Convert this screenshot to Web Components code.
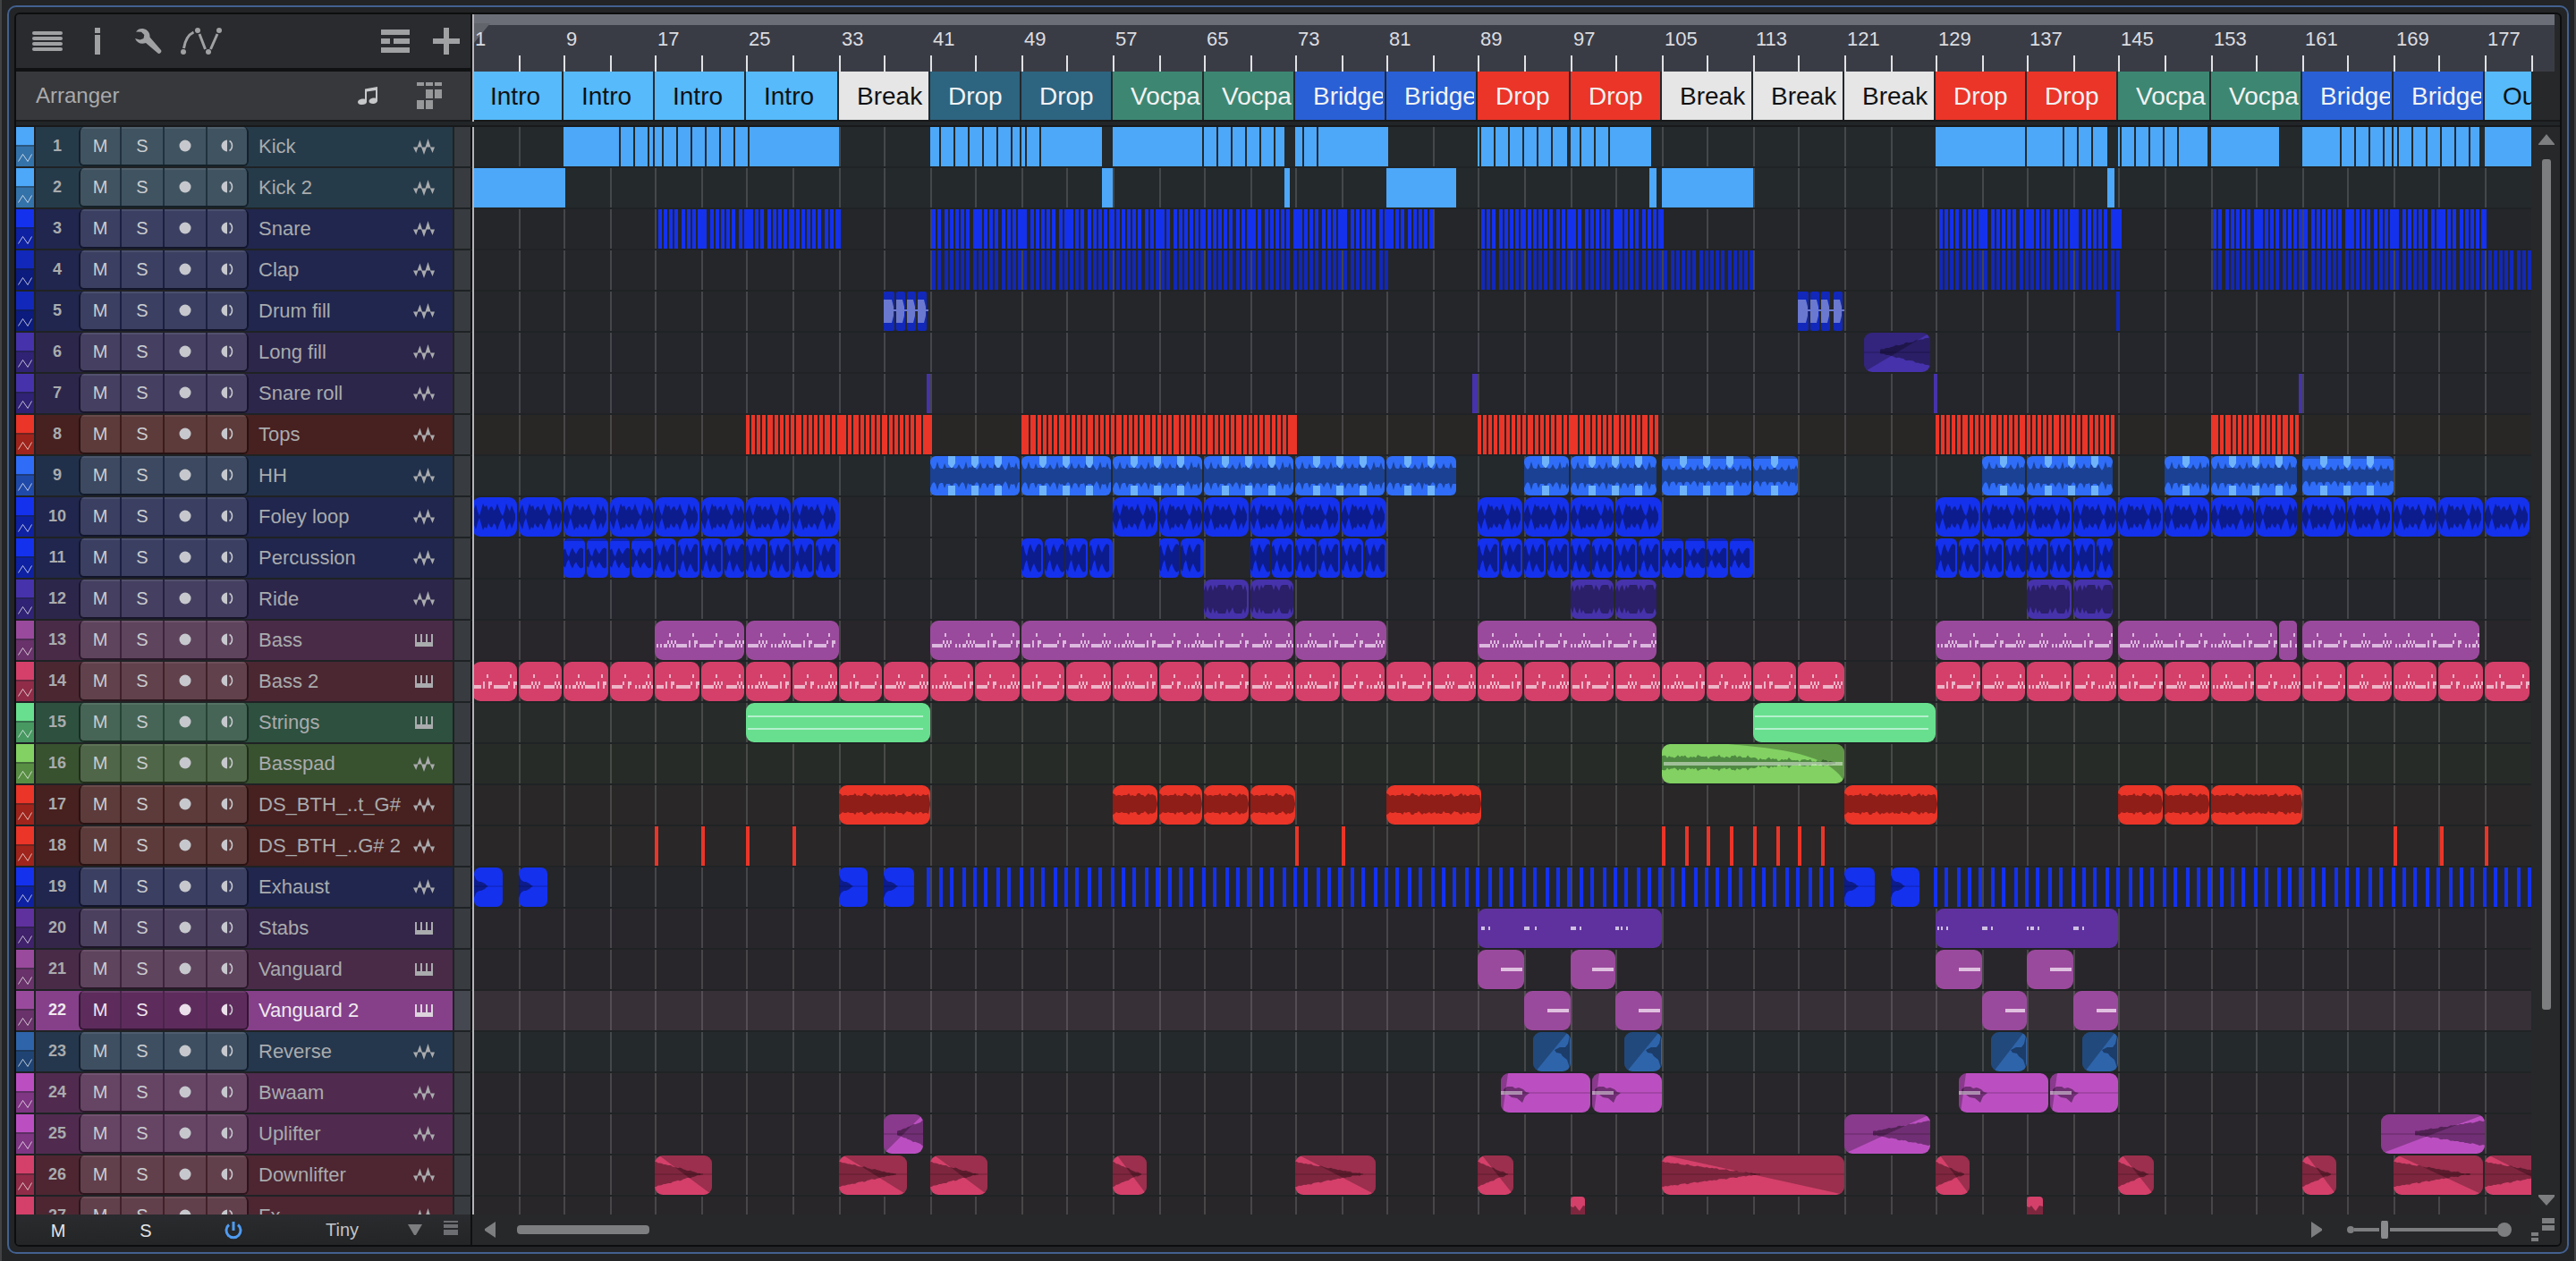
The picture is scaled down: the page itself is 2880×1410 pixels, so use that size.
<!DOCTYPE html>
<html lang="en">
<head>
<meta charset="utf-8">
<title>Arranger</title>
<style>
html,body{margin:0;height:100%;background:#222426}
body{font-family:"Liberation Sans",Arial,sans-serif;overflow:hidden}
</style>
</head>
<body>
<daw-window></daw-window>
<script>
const BAR = 12.784;
// x of a bar line, snapped to the two-pixel raster of the timeline
const R = b => 2 * Math.round((b - 1) * BAR / 2);
const X0 = 528;

class Base extends HTMLElement {
  constructor() {
    super();
    this.attachShadow({ mode: 'open' });
  }
  connectedCallback() {
    this.shadowRoot.innerHTML = `<style>
      *{box-sizing:border-box}
      button,select{all:unset;box-sizing:border-box;display:flex;align-items:center;justify-content:center;cursor:default}
      svg{display:block;flex:none}
      ${this.css()}</style>${this.html()}`;
  }
}

class ToolBar extends Base {
  css() { return `
    :host{display:flex;height:64px;padding-left:11px;background:#2a2b2e;border-bottom:4px solid #101112;color:#a0a1a3}
    svg{fill:currentColor}
    .w48{width:48px}.w50{width:50px}.w54{width:54px}.w60{width:60px}.w64{width:64px}.w68{width:68px}
    .sp{flex:1}`; }
  html() { return `
    <button class="w48" aria-label="Menu"><svg width="34" height="22"><rect width="34" height="4" rx="2"/><rect y="6" width="34" height="4" rx="2"/><rect y="12" width="34" height="4" rx="2"/><rect y="18" width="34" height="4" rx="2"/></svg></button>
    <button class="w64" aria-label="Inspector"><svg width="6" height="30"><rect width="6" height="6"/><rect y="8" width="6" height="22"/></svg></button>
    <button class="w50" aria-label="Tools"><svg width="30" height="30" viewBox="0 0 30 30"><path d="M1 4.500C3 1.500 6 .5 9 1c5 .8 8 5 7.500 9.500L29 25c1.500 2-1.500 5-3.500 3.500L12 17c-5 2-10 0-12-5l5.500 1.500 4-1.500.8-4L7 4.800z"/></svg></button>
    <button class="w68" aria-label="Automation"><svg width="46" height="30" viewBox="0 0 46 30"><g fill="none" stroke="currentColor" stroke-width="3"><path d="M3.500 23C5 14 8 8 14.500 5M21 7l6.500 17M33.500 24L41 7"/></g><circle cx="3" cy="27" r="3"/><circle cx="19" cy="3" r="3"/><circle cx="31" cy="27" r="3"/><circle cx="43" cy="3" r="3"/></svg></button>
    <span class="sp"></span>
    <button class="w60" aria-label="Track list"><svg width="32" height="26"><rect width="32" height="6"/><rect y="10" width="10" height="6"/><rect x="14" y="10" width="18" height="6"/><rect y="20" width="32" height="6"/></svg></button>
    <button class="w54" aria-label="Add track"><svg width="30" height="30"><rect y="12" width="30" height="6"/><rect x="12" width="6" height="30"/></svg></button>`; }
}
customElements.define('tool-bar', ToolBar);

class ArrangerHead extends Base {
  css() { return `
    :host{display:flex;align-items:center;height:54px;padding-left:22px;background:#37383b;color:#a9aaac;font-size:24px}
    span{flex:1}
    .n{width:46px;height:54px;color:#c6c8ca}.g{width:92px;height:54px;color:#97989a}
    svg{fill:currentColor}`; }
  html() { return `<span><slot></slot></span>
    <button class="n" aria-label="Time base"><svg width="22" height="20" viewBox="0 0 22 20"><path d="M8 2.500L22 0v15.500c0 2.200-2.500 3.500-5 3.500s-4.500-1-4.500-2.800c0-2.500 4-4.500 7.500-3.500V4L10 5.500V17c0 2-2.500 3-5 3s-5-.8-5-2.800c0-2.500 4-4.500 8-3.500z"/></svg></button>
    <button class="g" aria-label="Section list"><svg width="28" height="30"><path d="M0 0h8v4H0zM10 0h8v4h-8zM20 0h8v4h-8zM10 8h8v10h-8zM20 8h8v10h-8zM0 20h8v10H0zM10 20h8v10h-8z"/></svg></button>`; }
}
customElements.define('arranger-head', ArrangerHead);

class TimeRuler extends Base {
  css() { return `
    :host{display:block;height:64px;overflow:hidden;background:#3a3c45;position:relative;margin-right:6px}
    .top{height:12px;background:#6b6e77}
    .cells{display:flex;position:relative}
    .cell{flex:none}
    .num{height:34px;line-height:32px;padding-left:3px;font-size:22px;color:#dcdde0}
    .ticks{display:flex;height:18px}
    .ticks i{border-left:2px solid #e0e1e4}
    .mark{position:absolute;left:0;top:10px;fill:#62646c}`; }
  html() {
    let s = '';
    for (let b = 1; b <= 177; b += 8) {
      const a = R(b + 4) - R(b), c = b === 177 ? 26 : R(b + 8) - R(b + 4);
      s += `<div class="cell"><div class="num">${b}</div><div class="ticks"><i style="width:${a}px"></i><i style="width:${c}px"></i></div></div>`;
    }
    return `<div class="top"></div><svg class="mark" width="22" height="22"><path d="M0 0h20L2 22H0z"/></svg><div class="cells">${s}</div>`;
  }
}
customElements.define('time-ruler', TimeRuler);

const KINDS = {
  Intro: ['#57bafa', '#101214'], Break: ['#e6e6e6', '#101214'], Drop1: ['#2d6480', '#f2f2f2'],
  Vocpa: ['#3d8772', '#f2f2f2'], Bridge: ['#2a60d5', '#f2f2f2'], Drop2: ['#ea3528', '#f2f2f2'], Outro: ['#57bafa', '#101214']
};
const SECTIONS = 'Intro Intro Intro Intro Break Drop1 Drop1 Vocpa Vocpa Bridge Bridge Drop2 Drop2 Break Break Break Drop2 Drop2 Vocpa Vocpa Bridge Bridge Outro'.split(' ');
class ArrangerTrack extends Base {
  css() { return `
    :host{display:flex;height:54px;overflow:hidden;margin-right:32px;background:#222426}
    .s{flex:none;padding:0 2px 0 20px;border-right:2px solid #23282c;font-size:28px;line-height:56px}
    .s span{display:block;overflow:hidden;white-space:nowrap}`; }
  html() {
    return SECTIONS.map((k, i) => {
      const [bg, fg] = KINDS[k], b = 1 + i * 8;
      return `<div class="s" style="width:${R(b + 8) - R(b)}px;background:${bg};color:${fg}"><span>${k.replace(/\d/, '')}</span></div>`;
    }).join('');
  }
}
customElements.define('arranger-track', ArrangerTrack);

/* ---------- clip data ---------- */
const px = str => str.split(' ').map(p => p.split('-').map(v => +v - X0));
// back-to-back clips of `step` bars between bars a and b
const run = (a, b, step) => {
  const o = [];
  for (let x = a; x < b; x += step) o.push([R(x), x + step >= b && b < 181 ? R(b) : R(x + step) - 2, x]);
  return o;
};
// one long clip split by thin cuts
const cut = (a, b, cuts) => {
  const e = [a, ...cuts.flatMap(c => [c, c + 2]), b], o = [];
  for (let i = 0; i < e.length; i += 2) o.push([e[i] - X0, e[i + 1] - X0]);
  return o;
};
const rects = list => `<path d="${list.map(([a, b]) => `M${a} 0h${b - a}v44h${a - b}z`).join('')}"/>`;
let uid = 0;
const clip = ([a, b], r, inner) => {
  const id = 'c' + (uid++), w = b - a;
  return `<g transform="translate(${a} 0)"><clipPath id="${id}"><rect width="${w}" height="44" rx="${Math.min(r, w / 4)}"/></clipPath><g clip-path="url(#${id})"><rect width="${w}" height="44"/>${inner(w)}</g></g>`;
};
const clips = (list, r, inner) => list.map(c => clip(c, r, w => inner(w, c))).join('');
const wave = (tops, step, w, col, mid = 22, low = 1) => {
  const n = Math.min(tops.length, Math.ceil(w / step) + 1);
  let d = '';
  for (let i = 0; i < n; i++) d += (i ? 'L' : 'M') + i * step + ' ' + (mid - tops[i]);
  for (let i = n - 1; i >= 0; i--) d += 'L' + i * step + ' ' + (mid + tops[i] * low);
  return `<path fill="${col}" d="${d}z"/>`;
};
const noise = i => (Math.sin(i * 2.3) + Math.sin(i * 0.9 + 1) + Math.sin(i * 5.1)) / 3;

const snare = (a, b, fill, endFill) => {
  const o = [];
  for (let h = a + 0.25; h < b; h += 0.5) {
    const x = R(h);
    o.push([x, x + 4]);
    if (fill && h % 4 === 0.75 && (h + 0.25 < b || endFill)) o.push([x, x + 6]);
  }
  if (endFill) o.push([R(b) - 4, R(b) + 2]);
  return o;
};
const tops = (a, b, skip, end) => {
  const cuts = [];
  for (let h = a + 0.5; h < b; h += 0.5) {
    if (skip.includes(h)) continue;
    cuts.push(2 * Math.floor(((h - 1) * BAR - 0.6) / 2) - 2 + X0);
  }
  return cut(R(a) + X0, end, cuts.filter(c => c < end - 3));
};

// note cells of the bass riff, each two bars long: [x, y, w, h]
const RIFF = {
  A: [[2, 26, 2, 4], [6, 26, 2, 4], [10, 26, 4, 4], [14, 22, 2, 4], [16, 26, 2, 4], [18, 22, 2, 4], [20, 26, 2, 4], [22, 22, 2, 4]],
  B: [[-2, 26, 12, 4], [12, 22, 2, 8], [18, 22, 4, 4], [18, 26, 2, 4], [24, 26, 2, 4]],
  C: [[0, 26, 14, 4], [14, 22, 2, 4], [20, 22, 4, 4], [20, 26, 2, 4]],
  D: [[2, 26, 12, 4], [14, 22, 2, 4], [16, 26, 2, 4], [18, 22, 2, 4], [20, 26, 2, 4], [22, 22, 2, 4]]
};
const riff = (w, bar, col) => {
  let s = '';
  const k0 = Math.round((bar - 1) / 2);
  for (let i = 0; i * 25.6 < w - 8; i++) {
    const x = 2 * Math.round(i * 12.8);
    const list = [[16, 14, 2, 4], ...RIFF['ABCDDABC'[(k0 + i) % 8]]];
    for (const [nx, y, nw, h] of list) {
      const l = Math.max(2, x + nx), r = x + nx + nw;
      if (r <= w) s += `M${l} ${y}H${r}v${h}H${l}z`;
    }
  }
  return `<path fill="${col}" d="${s}"/>`;
};

const FOLEY = [4, 9, 14, 6, 1, 8, 15, 11, 13, 7, 11, 12, 7, 9, 15, 9, 4, 1, 6, 15, 10, 6, 13, 8, 3];
const PERC = [12, 15, 6, 2, 11, 16, 10, 6, 11, 15, 16, 14];
const RIDE = [9, 16, 8, 14, 16, 9, 16, 12, 16, 16, 16, 16, 16, 10, 16, 13, 9, 15, 16, 16, 16, 16, 10, 16, 8];
const RED = Array.from({ length: 120 }, (_, i) => Math.round(10 + 2.5 * noise(i) + (i % 11 === 0 ? 1 : 0)));

const fadeIn = (w, start, max) => {
  const p = [];
  const n = Math.round((w - start) / 2);
  for (let i = 0; i <= n; i++) p.push(Math.max(1.5, 2 + (max - 2) * i / n + noise(i)));
  return `<path d="M0 21h${w}v2H0z" fill="#0002"/><g transform="translate(${start} 0)">${wave(p, 2, w, '#0006', 21)}</g><path d="M0 44L${w} 0H0z" fill="#0004"/>`;
};
const fadeOut = (w, len, max) => {
  const p = [];
  const n = Math.round(len / 2);
  for (let i = 0; i <= n; i++) p.push(Math.max(0.5, max * (1 - i / n) + noise(i)));
  return `<path d="M0 20h${w}v2H0z" fill="#0002"/>${wave(p, 2, w, '#0006', 21)}<path d="M5 0L${w} 44V0z" fill="#0004"/>`;
};
const bars = (list, y, h, col) => `<path fill="${col}" d="${px(list).map(([a, b]) => `M${a} ${y}h${b - a}v${h}h${a - b}z`).join('')}"/>`;

const exhaust = (a, b) => {
  const o = [];
  for (let i = a; i <= b; i++) { const x = 2 * Math.round(((i - 1) * BAR - 2.6) / 2); o.push([x, x + 4]); }
  return o;
};
const hhWave = faded => w => {
  let s = '';
  const spikes = [14, 8, 15, 7, 12, 6, 14, 9, 13, 6, 15, 8];
  const p = [];
  for (let i = 0; i * 2 <= w; i++) p.push((i % 2 ? 8 : spikes[(i * 5 >> 1) % 12]) + (i % 7 ? 1 : 0));
  if (faded) s += `<rect width="${w}" height="3" fill="#0004"/>`;
  for (let x = 20; x < w - 10; x += 26) {
    s += `<path fill="#6fb4fa" d="M${x} 0h8v8l-3 5h-2l-3-4zM${x} 44h8V33h-8z"/>`;
  }
  return wave(faded ? p.map(v => v * 0.8) : p, 2, w, '#1b4194', 22) + s;
};
const percWave = w => wave(PERC, 2, w, '#0c1c8d');
const percLow = w => `<rect width="${w}" height="3" fill="#0004"/>` + wave(PERC.map(v => v * 0.72), 2, w, '#0c1c8d');
const redWave = w => wave(RED.slice(0, Math.floor(w / 2)).concat(1), 2, w, '#8f1d18', 21);
const kickWave = w => wave([13, 8, 6, 5, 5, 4, 3, 1, 0], 2, w, '#0c1c8d', 21) + `<path d="M0 20h${w}v2H0z" fill="#0002"/>`;

const LANES = {
  1: () => rects([
    ...cut(630, 938, [692, 708, 724, 730, 740, 756, 772, 788, 804, 820, 836]),
    ...cut(1040, 1232, [1050, 1066, 1082, 1098, 1114, 1130, 1140, 1146, 1162]),
    ...cut(1244, 1436, [1344, 1360, 1376, 1392, 1408, 1424]), ...cut(1448, 1552, [1456, 1472]),
    ...cut(1652, 1752, [1654, 1670, 1686, 1702, 1718, 1734]), ...cut(1756, 1846, [1766, 1782, 1798]),
    ...cut(2164, 2356, [2264, 2306, 2322, 2338]), ...cut(2368, 2468, [2370, 2386, 2402, 2418, 2434]),
    ...px('2472-2548'), ...cut(2574, 2772, [2616, 2632, 2648, 2664, 2674, 2680, 2696, 2712, 2728, 2744, 2760]), ...px('2778-2860')]),
  2: () => rects(px('530-632 1232-1244 1436-1442 1550-1628 1844-1852 1858-1960 2356-2364')),
  3: () => rects([...snare(17, 33, 1, 1), ...snare(41, 85, 1, 0), ...snare(89, 105, 1, 1), ...snare(129, 145, 1, 1), ...snare(153, 161, 1, 0), ...snare(161, 177, 1, 1)]),
  4: () => rects([...snare(41, 81, 0, 0), ...snare(89, 113, 0, 0), ...snare(129, 145, 0, 0), ...snare(153, 181, 0, 0)]),
  5: () => clips(px('988-1000 1002-1012 1014-1024 1026-1036 2010-2022 2024-2034 2036-2046 2050-2060'), 2,
      w => `<path fill="#6a78cf" d="M0 9h${w - 3}l2 8v10l-2 8H0zM0 20h${w}v2H0z"/>`) +
      bars('1000-1002 1012-1014 1024-1026 1036-1038 2022-2024 2034-2036 2046-2050 2060-2062', 20, 2, '#6a78cf') + rects(px('2366-2370')),
  6: () => clips(px('2084-2158'), 9, w => fadeIn(w, 18, 16)),
  7: () => rects(px('1036-1040 1646-1652 2162-2166 2570-2574')),
  8: () => rects([...tops(25, 41, [33.5], 1042), ...tops(49, 73, [49.5], 1450), ...tops(89, 105, [97.5], 1854), ...tops(129, 145, [], 2364), ...tops(153, 161, [153.5], 2570)]),
  9: () => clips(px('1040-1140 1142-1242 1244-1344 1346-1446 1448-1548 1550-1628 1704-1754 1756-1852 2216-2264 2266-2362 2420-2470 2472-2568'), 6, hhWave(false)) +
      clips(px('1858-1958 1960-2010 2574-2676'), 6, hhWave(true)),
  10: () => clips([...run(1, 33, 4), ...run(57, 81, 4), ...run(89, 105, 4), ...run(129, 157, 4).map(([a, b, c]) => [a, c === 153 ? b - 2 : b]), ...px('2522-2568'), ...run(161, 181, 4)], 9, w => wave(FOLEY, 2, w, '#0c1c8d')),
  11: () => clips([...run(9, 17, 2), ...run(105, 113, 2)].map(([a, b, c]) => [a, c === 15 ? b - 2 : b]), 6, percLow) +
      clips([...run(17, 33, 2), ...run(49, 57, 2), ...run(61, 65, 2), ...run(69, 81, 2), ...run(89, 105, 2), ...run(129, 143, 2), ...px('2344-2362')].map(([a, b, c]) => [a, c === 103 || c === 141 ? b - 2 : b]), 6, percWave),
  12: () => clips(px('1346-1396 1398-1446 1756-1804 1806-1852 2266-2316 2318-2362'), 8, w => wave(RIDE, 2, w, '#2a1f68')),
  13: () => clips([[732, 832, 1], [834, 938, 9], [1040, 1140, 9], [1142, 1446, 3], [1448, 1550, 1], [1652, 1852, 9], [2164, 2362, 1], [2368, 2546, 9], [2548, 2568, 3], [2574, 2772, 3]].map(([a, b, c]) => [a - X0, b - X0, c]),
      9, (w, c) => riff(w, c[2], '#dcb8de')),
  14: () => clips([...run(1, 121, 4), ...run(129, 181, 4)], 9, (w, c) => riff(w, c[2] + 2, '#edb5c8')),
  15: () => clips(px('834-1040 1960-2164'), 9, w => `<path fill="#b4f1cd" d="M2 14h${w - 10}v2H2zM2 28h${w - 10}v2H2z"/>`),
  16: () => clips(px('1858-2062'), 9, w => {
      const p = [];
      for (let i = 0; i < 98; i++) p.push(Math.max(1, (i < 50 ? 7 : 5 - (i - 50) / 14) + 2.6 * noise(i * 0.7)));
      return wave(p, 2, w, '#4f8a42', 21) + `<path fill="#0004" d="M74 0C130 5 185 10 ${w} 42V0z"/><path fill="#fff7" d="M2 20h${w - 4}v4H2z"/>`;
    }),
  17: () => clips(px('938-1040 1244-1294 1296-1344 1346-1396 1398-1448 1550-1656 2062-2166 2368-2418 2420-2470 2472-2574'), 9, redWave),
  18: () => rects(px('732-736 784-788 834-838 886-890 1448-1452 1500-1504 1858-1862 1884-1888 1908-1912 1934-1938 1960-1964 1986-1990 2010-2014 2036-2040 2676-2680 2728-2732 2778-2782')),
  19: () => clips(px('530-562 580-612 938-970 988-1022 2062-2096 2114-2146'), 7, kickWave) + rects([...exhaust(41, 120), ...exhaust(129, 181)]),
  20: () => clips(px('1652-1858 2164-2368'), 9, () => '') + bars('1656-1660 1664-1666 1704-1710 1716-1718 1756-1762 1766-1768 1806-1810 1812-1814 1818-1820 2166-2168 2170-2172 2176-2178 2216-2222 2226-2228 2266-2268 2270-2274 2278-2280 2318-2324 2328-2330', 20, 4, '#cfc0e2'),
  21: () => clips(px('1652-1704 1756-1806 2164-2216 2266-2318'), 9, () => '') + bars('1678-1702 1780-1804 2190-2214 2292-2316', 20, 4, '#dfc0e0'),
  22: () => clips(px('1704-1756 1806-1858 2216-2266 2318-2368'), 9, () => '') + bars('1730-1754 1832-1856 2242-2264 2344-2366', 20, 4, '#dfc0e0'),
  23: () => clips(px('1714-1756 1816-1858 2226-2266 2328-2368'), 9, w => `<path fill="#0004" d="M3 44L${w - 3} 0H0v44z"/><path fill="#1c3c69" d="M${w - 18} 20l6-3h6l3-4 2-9v36l-3-9-5-4-2-3-5-1z"/>`),
  24: () => clips(px('1678-1778 1780-1858 2190-2290 2292-2368'), 9, w => `<path d="M0 21h${w}v2H0z" fill="#0002"/><path fill="#0004" d="M0 0h8L2 44H0z"/><path fill="#0006" d="M3 18l4-3h6l3 2 4-1 5 2 3 3 4 1-5 4-3 7-6-5-6-1-4-3-5 0z"/><path fill="#fff7" d="M0 20h24v4H0z"/>`),
  25: () => clips(px('988-1032 2062-2158 2662-2778'), 9, w => fadeIn(w, Math.round(w * 0.33), 14)),
  26: () => clips(px('732-796 938-1014 1040-1104 1244-1282 1448-1538 1652-1692 1858-2062 2164-2202 2368-2408 2574-2612 2676-2776 2778-2870'), 9, w => fadeOut(w, w > 150 ? 110 : w * 0.85, 14)),
  27: () => clips(px('1756-1772 2266-2284'), 4, w => `<path fill="#0006" d="M0 11l3 1 2-2 3 4 2 2 2-3 2-3 4 1v34H0z"/>`)
};

class ClipLane extends Base {
  css() { return `
    :host{display:block;height:46px;overflow:hidden;background:var(--lane);border-bottom:2px solid #202325;color:var(--clip)}
    svg{width:100%;height:44px;fill:currentColor;overflow:hidden}`; }
  html() {
    let g = '';
    for (let b = 5; b <= 400; b += 4) g += `M${R(b)} 0h2v44h-2z`;
    return `<svg height="44"><path fill="#ffffff26" d="${g}"/>${LANES[this.getAttribute('track')]()}</svg>`;
  }
}
customElements.define('clip-lane', ClipLane);

const AUDIO = '<svg width="24" height="18" viewBox="0 0 24 18"><path d="M0 9.500H5.500L3.200 16zM4.500 9.500L7.500 1.500 10 9.500zM9 9.500h6L12 18zM13.500 9.500L16.500 0 19.500 9.500zM18.800 9.500H24L21.500 16z"/></svg>';
const KEYS = '<svg class="keys" width="20" height="14" viewBox="0 0 20 14"><path d="M0 0h2v9h4V0h2v9h4V0h2v9h4V0h2v14H0z"/></svg>';

class TrackHead extends Base {
  css() { return `
    :host{display:flex;width:510px;height:46px;flex:none;background:#1f2224;border-right:2px solid #0f1011;border-bottom:2px solid #1f2224}
    .strip{width:20px;margin-right:2px;background:var(--clip);display:flex;flex-direction:column;justify-content:flex-end}
    .auto{height:24px;border-top:2px solid color-mix(in srgb,var(--clip) 45%,#101418);background:color-mix(in srgb,var(--clip) 68%,#000);padding:7px 2px}
    .auto svg{fill:none;stroke:#ffffffb0}
    .body{flex:1;display:flex;background:var(--head);color:#a9abad}
    .num{width:48px;text-align:center;font:bold 18px/42px "Liberation Sans",Arial,sans-serif}
    .btns{display:flex;gap:2px;border:2px solid #0005;border-top:0;border-radius:6px;background:var(--sep);overflow:hidden}
    button{width:46px;font-size:20px;color:#c9ccd0;background:var(--btn);box-shadow:inset 0 2px 0 #ffffff14}
    button:first-child,button:last-child{width:44px}
    .btns svg{fill:#c6c8cd}
    .name{flex:1;padding-left:11px;font-size:22px;line-height:43px;white-space:nowrap}
    .ico{width:44px;display:flex;align-items:center;justify-content:flex-start;fill:#a9abad}
    .keys{margin-left:2px}
    .meter{width:18px;margin-left:2px;background:#383b3f}
    :host([selected]) .body{color:#f0eaf0}
    :host([selected]) .ico{fill:#dcd3dc}
    :host([selected]) button{color:#f0e6f0}
    :host([selected]) .btns svg{fill:#eadfea}
    :host([selected]) .meter{background:#454850}`; }
  html() { return `
    <div class="strip"><div class="auto"><svg width="16" height="12"><path d="M.5 9.500L5.500 1.500 11 9.500 15.500 1.500"/></svg></div></div>
    <div class="body"><div class="num">${this.getAttribute('num')}</div>
    <div class="btns"><button aria-label="Mute">M</button><button aria-label="Solo">S</button>
      <button aria-label="Record"><svg width="14" height="14"><circle cx="7" cy="7" r="6.500"/></svg></button>
      <button aria-label="Monitor"><svg width="14" height="14" viewBox="0 0 14 14"><path d="M7 .5v13C3 13 .5 10 .5 7S3 1 7 .5z"/><path d="M9.500 1.500c4 2 4 9 0 11" fill="none" stroke="#c6c8cd" stroke-width="1.500"/></svg></button></div>
    <div class="name"><slot></slot></div><div class="ico">${this.hasAttribute('keys') ? KEYS : AUDIO}</div></div>
    <div class="meter"></div>`; }
}
customElements.define('track-head', TrackHead);

// name, clip colour, header colour, lane colour, is instrument
const TRACKS = [
  ['Kick', '#4da8fa', '#263b4a', '#24292b'], ['Kick 2', '#4da8fa', '#263b4a', '#24292b'],
  ['Snare', '#1431ee', '#20264d', '#25262a'], ['Clap', '#1128ba', '#20264d', '#25262a'], ['Drum fill', '#1128ba', '#20264d', '#25262a'],
  ['Long fill', '#4632ab', '#2c264b', '#25262c'], ['Snare roll', '#4632ab', '#2c264b', '#25262c'],
  ['Tops', '#ea3528', '#472020', '#292626'], ['HH', '#2f6df8', '#21304a', '#24292b'],
  ['Foley loop', '#1431ee', '#20264d', '#25262a'], ['Percussion', '#1431ee', '#20264d', '#25262a'], ['Ride', '#4632ab', '#2c264b', '#25262c'],
  ['Bass', '#9a4a9c', '#492b48', '#28262a', 1], ['Bass 2', '#d4406a', '#4b2732', '#282629', 1],
  ['Strings', '#68df8e', '#2d503f', '#272b29', 1], ['Basspad', '#82d162', '#38512f', '#272b27'],
  ['DS_BTH_..t_G#', '#ea3528', '#472020', '#292727'], ['DS_BTH_..G# 2', '#ea3528', '#472020', '#292727'],
  ['Exhaust', '#1431ee', '#20264d', '#25262a'], ['Stabs', '#5e319e', '#342649', '#28262b', 1],
  ['Vanguard', '#9a4a9c', '#492b48', '#28262a', 1], ['Vanguard 2', '#9a4a9c', '#86408a', '#373037', 1],
  ['Reverse', '#2e64aa', '#25374d', '#24292b'], ['Bwaam', '#bb4fc1', '#502b4f', '#28262a'], ['Uplifter', '#bb4fc1', '#502b4f', '#28262a'],
  ['Downlifter', '#d4406a', '#4d2632', '#282629'], ['Fx', '#d4406a', '#4d2632', '#282629']
];

class TrackList extends Base {
  css() { return `
    :host{display:block;overflow:hidden;position:relative;min-height:0}
    .row{display:flex}
    clip-lane{flex:1;min-width:0}
    .play{position:absolute;left:510px;top:0;bottom:0;width:2px;background:#b4b4b8}`; }
  html() {
    return TRACKS.map(([n, c, h, l, k], i) => {
      const sel = n === 'Vanguard 2';
      const btn = sel ? '#5d2c5c' : `color-mix(in srgb,${h} 88%,#fff)`, sep = sel ? '#4a234a' : `color-mix(in srgb,${h} 84%,#000)`;
      return `<div class="row" style="--clip:${c};--head:${h};--lane:${l};--btn:${btn};--sep:${sep}"><track-head num="${i + 1}"${k ? ' keys' : ''}${sel ? ' selected' : ''}>${n}</track-head><clip-lane track="${i + 1}"></clip-lane></div>`;
    }).join('') + '<div class="play"></div>';
  }
}
customElements.define('track-list', TrackList);

class VScroll extends Base {
  css() { return `
    :host{display:flex;flex-direction:column;align-items:center;width:32px;padding:8px 0 10px 2px;background:#26282a;fill:#7d7e80}
    .rail{flex:1;margin:16px 0 12px}
    .thumb{width:10px;height:83%;background:#7d7e80;border-radius:3px}`; }
  html() { return `<svg width="18" height="12"><path d="M9 0l9 11v1H0v-1z"/></svg><div class="rail"><div class="thumb"></div></div><svg width="18" height="12"><path d="M0 0h18v2L9 12 0 2z"/></svg>`; }
}
customElements.define('v-scroll', VScroll);

class BottomBar extends Base {
  css() { return `
    :host{display:flex;flex:none;height:34px;background:#272829;fill:#7d7e80;color:#e3e4e6;font-size:20px}
    .left{display:flex;width:510px;flex:none;border-right:2px solid #0f1011;background:linear-gradient(#2a2b2e,#232526)}
    .left button{width:98px;padding:2px 4px 0 0}
    .left .size{display:flex;flex:1;align-items:center;padding-left:52px}
    select{width:92px;color:#c4c5c7;justify-content:flex-start;line-height:30px}
    .left .list{width:40px;padding:0 4px 4px 0;fill:#6d6e72}
    .right{flex:1;display:flex;align-items:center;padding:0 6px 0 14px}
    .rail{flex:1;margin:0 24px}
    .thumb{width:148px;height:10px;border-radius:4px;background:#7d7e80}
    .zoom{display:flex;align-items:center;margin:0 22px 0 28px}
    input{appearance:none;width:160px;height:20px;margin:0;background:linear-gradient(#7d7e80,#7d7e80) center/100% 4px no-repeat}
    input::-webkit-slider-thumb{appearance:none;width:12px;height:20px;border:2px solid #272829;border-width:0 2px;border-radius:3px;background:#8a8b8d}`; }
  html() { return `
    <div class="left"><button>M</button><button>S</button>
    <button aria-label="Power"><svg width="22" height="20" viewBox="0 0 22 20" fill="none" stroke="#4f9bf0" stroke-width="3"><path d="M6 3.500a8 8 0 1 0 10 0M11 0v10"/></svg></button>
    <label class="size"><select aria-label="Track height"><option>Tiny</option><option>Small</option><option>Normal</option></select><svg width="16" height="12"><path d="M0 0h16L9 12H7z"/></svg></label>
    <button class="list" aria-label="Lanes"><svg width="16" height="16"><path d="M0 0h16v2H0zM0 4h16v4H0zM0 10h16v6H0z"/></svg></button></div>
    <div class="right"><svg width="12" height="18"><path d="M12 0v18L0 10V8z"/></svg><div class="rail"><div class="thumb"></div></div>
    <svg width="12" height="18"><path d="M0 0v18L12 10V8z"/></svg>
    <div class="zoom"><svg width="8" height="8"><circle cx="4" cy="4" r="4"/></svg><input type="range" aria-label="Zoom" value="19"><svg width="16" height="16"><circle cx="8" cy="8" r="8"/></svg></div>
    <svg width="26" height="26"><path d="M12 0h14v6H12zM12 8h14v6H12zM0 16h8v4H0zM0 22h8v4H0z"/></svg></div>`; }
}
customElements.define('bottom-bar', BottomBar);

class DawWindow extends Base {
  css() { return `
    :host{display:block;box-sizing:border-box;height:100vh;padding:6px 6px 8px;border:solid #404244;border-width:0 2px;background:#222426}
    .frame{height:100%;padding:6px;border:2px solid #43608f;border-radius:10px}
    .panel{height:100%;display:flex;flex-direction:column;border:2px solid #0c0d0e;border-radius:6px;overflow:hidden;background:#26282a}
    .top{display:flex;flex:none;position:relative}
    .heads{width:510px;flex:none;border-right:2px solid #0f1011}
    .time{flex:1;min-width:0}
    .play{position:absolute;left:510px;top:0;bottom:-2px;width:2px;background:#b4b4b8}
    .gap{flex:none;height:8px;background:#222527;border:2px solid #17191a;border-width:2px 0}
    .main{flex:1;display:flex;min-height:0}
    track-list{flex:1}`; }
  html() { return `<div class="frame"><div class="panel">
    <div class="top"><div class="heads"><tool-bar></tool-bar><arranger-head>Arranger</arranger-head></div>
    <div class="time"><time-ruler></time-ruler><arranger-track></arranger-track></div><div class="play"></div></div>
    <div class="gap"></div>
    <div class="main"><track-list></track-list><v-scroll></v-scroll></div>
    <bottom-bar></bottom-bar></div></div>`; }
}
customElements.define('daw-window', DawWindow);
</script>
</body>
</html>
